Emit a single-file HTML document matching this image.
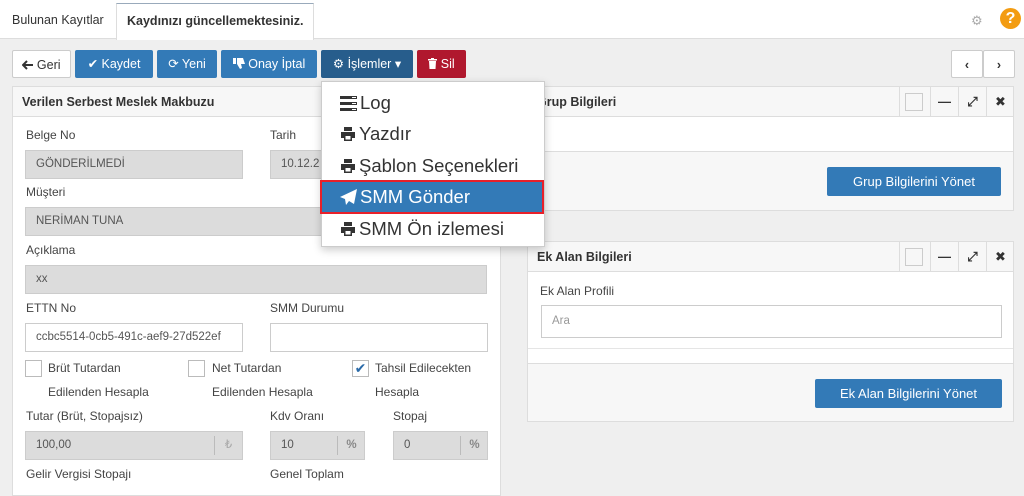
<!DOCTYPE html>
<html><head><meta charset="utf-8"><style>
*{box-sizing:border-box;margin:0;padding:0}
body{width:1024px;height:488px;overflow:hidden;background:#efefef;font-family:"Liberation Sans","DejaVu Sans",sans-serif;font-size:12px;color:#333;position:relative}
.a{position:absolute}
.topbar{left:0;top:0;width:1024px;height:39px;background:#fff;border-bottom:1px solid #ddd}
.btn{position:absolute;top:50px;height:28px;color:#fff;font-size:12.5px;line-height:28px;text-align:center;border-radius:2px;background:#337ab7}
.btn svg{vertical-align:-1px}
.panel{position:absolute;background:#fff;border:1px solid #ddd}
.ph{position:absolute;left:0;right:0;top:0;height:30px;background:#f7f7f7;border-bottom:1px solid #ddd;font-weight:bold;font-size:12.5px;line-height:30px;padding-left:9px;color:#333}
.lbl{position:absolute;font-size:12px;color:#444}
.in{position:absolute;height:29px;border:1px solid #ccc;background:#dcdcdc;font-size:11.5px;line-height:27px;padding-left:10px;color:#555}
.w{background:#fff}
.cb{position:absolute;width:17px;height:17px;border:1px solid #bbb;background:#fff}
.dd{left:321px;top:81px;width:224px;height:166px;background:#fff;border:1px solid #ccc;box-shadow:0 3px 8px rgba(0,0,0,.2)}
.it{position:absolute;left:18px;font-size:18.5px;color:#333;height:30px;line-height:30px}
.it svg{vertical-align:-2px;margin-right:3px}
.ctl{position:absolute;top:0;width:28px;height:30px;border-left:1px solid #ddd;text-align:center;line-height:30px;font-weight:bold;font-size:13px}
.bb{position:absolute;background:#337ab7;color:#fff;font-size:13px;text-align:center;line-height:29px;height:29px;border-radius:2px}
</style></head><body>
<svg width="0" height="0" style="position:absolute"><defs>
<symbol id="pr" viewBox="0 0 16 16"><path d="M4 1h8v4H4z M1 6h14v6h-3v3H4v-3H1z" fill="#333"/><path d="M5.5 10h5v3.5h-5z" fill="#fff"/></symbol>
</defs></svg>
<div class="a topbar"></div>
<div class="a" style="left:12px;top:13px;font-size:12.5px;color:#333">Bulunan Kayıtlar</div>
<div class="a" style="left:116px;top:3px;width:198px;height:37px;background:#fff;border:1px solid #ddd;border-top:1px solid #9ab;border-bottom:none;font-weight:bold;font-size:12.5px;line-height:34px;padding-left:10px">Kaydınızı güncellemektesiniz.</div>
<div class="a" style="left:971px;top:13px;color:#aaa;font-size:13px">⚙</div>
<div class="a" style="left:1000px;top:8px;width:21px;height:21px;border-radius:50%;background:#f39c12;color:#fff;font-weight:bold;font-size:16px;text-align:center;line-height:21px">?</div>

<div class="btn" style="left:12px;width:59px;background:#fff;color:#333;border:1px solid #ccc"><svg width="11" height="10" viewBox="0 0 11 10"><path d="M5 1L1 5l4 4M1 5h10" stroke="#333" stroke-width="2" fill="none"/></svg> Geri</div>
<div class="btn" style="left:75px;width:78px">✔ Kaydet</div>
<div class="btn" style="left:157px;width:60px">⟳ Yeni</div>
<div class="btn" style="left:221px;width:96px"><svg width="12" height="11" viewBox="0 0 12 11"><path d="M0 0h3v6H0zM4 0h6l2 6H8l1 4-2 1-3-5z" fill="#fff"/></svg> Onay İptal</div>
<div class="btn" style="left:321px;width:92px;background:#275d8c">⚙ İşlemler ▾</div>
<div class="btn" style="left:417px;width:49px;background:#b0182e"><svg width="9" height="11" viewBox="0 0 9 11"><path d="M0 1h9v1.5H0zM3 0h3v1H3zM1 3h7l-.5 8h-6z" fill="#fff"/></svg> Sil</div>
<div class="btn" style="left:951px;width:32px;background:#fff;color:#333;border:1px solid #ccc;font-weight:bold">‹</div>
<div class="btn" style="left:983px;width:32px;background:#fff;color:#333;border:1px solid #ccc;font-weight:bold">›</div>

<div class="panel" style="left:12px;top:86px;width:489px;height:410px">
<div class="ph">Verilen Serbest Meslek Makbuzu</div></div>
<div class="lbl" style="left:26px;top:128px">Belge No</div>
<div class="lbl" style="left:270px;top:128px">Tarih</div>
<div class="in" style="left:25px;top:150px;width:218px">GÖNDERİLMEDİ</div>
<div class="in" style="left:270px;top:150px;width:100px">10.12.2</div>
<div class="lbl" style="left:26px;top:185px">Müşteri</div>
<div class="in" style="left:25px;top:207px;width:462px">NERİMAN TUNA</div>
<div class="lbl" style="left:26px;top:243px">Açıklama</div>
<div class="in" style="left:25px;top:265px;width:462px">xx</div>
<div class="lbl" style="left:26px;top:301px">ETTN No</div>
<div class="lbl" style="left:270px;top:301px">SMM Durumu</div>
<div class="in w" style="left:25px;top:323px;width:218px;overflow:hidden;white-space:nowrap">ccbc5514-0cb5-491c-aef9-27d522ef</div>
<div class="in w" style="left:270px;top:323px;width:218px"></div>
<div class="cb" style="left:25px;top:360px"></div>
<div class="cb" style="left:188px;top:360px"></div>
<div class="cb" style="left:352px;top:360px;color:#2a6aa8;font-size:14px;line-height:15px;text-align:center">✔</div>
<div class="lbl" style="left:48px;top:361px">Brüt Tutardan</div>
<div class="lbl" style="left:212px;top:361px">Net Tutardan</div>
<div class="lbl" style="left:375px;top:361px">Tahsil Edilecekten</div>
<div class="lbl" style="left:48px;top:385px">Edilenden Hesapla</div>
<div class="lbl" style="left:212px;top:385px">Edilenden Hesapla</div>
<div class="lbl" style="left:375px;top:385px">Hesapla</div>
<div class="lbl" style="left:26px;top:409px">Tutar (Brüt, Stopajsız)</div>
<div class="lbl" style="left:270px;top:409px">Kdv Oranı</div>
<div class="lbl" style="left:393px;top:409px">Stopaj</div>
<div class="in" style="left:25px;top:431px;width:218px">100,00<span style="position:absolute;left:188px;top:4px;height:19px;border-left:1px solid #bbb;width:28px;text-align:center;line-height:19px;color:#aaa">₺</span></div>
<div class="in" style="left:270px;top:431px;width:95px">10<span style="position:absolute;left:66px;top:4px;height:19px;border-left:1px solid #bbb;width:28px;text-align:center;line-height:19px;color:#888;font-weight:bold">%</span></div>
<div class="in" style="left:393px;top:431px;width:95px">0<span style="position:absolute;left:66px;top:4px;height:19px;border-left:1px solid #bbb;width:28px;text-align:center;line-height:19px;color:#888;font-weight:bold">%</span></div>
<div class="lbl" style="left:26px;top:467px">Gelir Vergisi Stopajı</div>
<div class="lbl" style="left:270px;top:467px">Genel Toplam</div>

<div class="panel" style="left:527px;top:86px;width:487px;height:125px">
<div class="ph">Grup Bilgileri</div>
<div class="ctl" style="left:371px"><div style="width:18px;height:18px;border:1px solid #ccc;margin:6px auto"></div></div>
<div class="ctl" style="left:402px">—</div><div class="ctl" style="left:430px">⤢</div><div class="ctl" style="left:458px">✖</div>
<div class="a" style="left:10px;top:37px">]</div>
<div class="a" style="left:0;right:0;top:64px;bottom:0;background:#f7f7f7;border-top:1px solid #ddd"></div>
<div class="bb" style="left:299px;top:80px;width:174px">Grup Bilgilerini Yönet</div>
</div>

<div class="panel" style="left:527px;top:241px;width:487px;height:181px">
<div class="ph">Ek Alan Bilgileri</div>
<div class="ctl" style="left:371px"><div style="width:18px;height:18px;border:1px solid #ccc;margin:6px auto"></div></div>
<div class="ctl" style="left:402px">—</div><div class="ctl" style="left:430px">⤢</div><div class="ctl" style="left:458px">✖</div>
<div class="lbl" style="left:12px;top:42px">Ek Alan Profili</div>
<div class="in w" style="left:13px;top:63px;width:461px;height:33px;line-height:31px;color:#999">Ara</div>
<div class="a" style="left:0;right:0;top:106px;height:1px;background:#e5e5e5"></div>
<div class="a" style="left:0;right:0;top:121px;bottom:0;background:#f7f7f7;border-top:1px solid #ddd"></div>
<div class="bb" style="left:287px;top:137px;width:187px">Ek Alan Bilgilerini Yönet</div>
</div>

<div class="a dd">
<div class="it" style="top:6px"><svg width="17" height="15" viewBox="0 0 17 15"><path d="M0 0h17v3H0zM0 6h17v3H0zM0 12h17v3H0z" fill="#333"/><path d="M12 1h4v1h-4zM12 7h4v1h-4zM12 13h4v1h-4z" fill="#fff"/></svg>Log</div>
<div class="it" style="top:37px"><svg width="16" height="16"><use href="#pr"/></svg>Yazdır</div>
<div class="it" style="top:69px"><svg width="16" height="16"><use href="#pr"/></svg>Şablon Seçenekleri</div>
<div class="a" style="left:-2px;top:98px;width:224px;height:34px;background:#337ab7;border:2px solid #e8202a"></div>
<div class="it" style="top:100px;color:#fff"><svg width="17" height="16" viewBox="0 0 17 16"><path d="M17 0L0 8l5 2 1 6 3-4 5 3z" fill="#fff"/></svg>SMM Gönder</div>
<div class="it" style="top:132px"><svg width="16" height="16"><use href="#pr"/></svg>SMM Ön izlemesi</div>
</div>
</body></html>
